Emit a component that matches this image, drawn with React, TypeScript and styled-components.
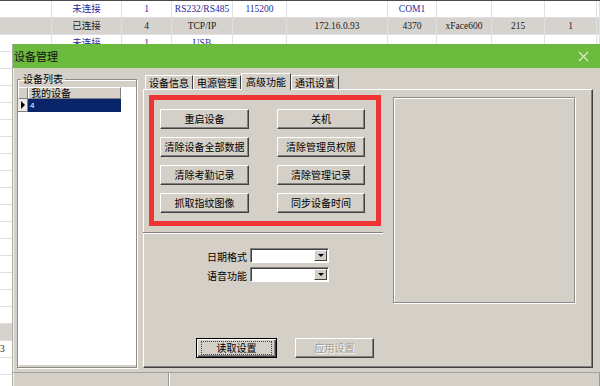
import React from 'react';
import styled, { createGlobalStyle, css } from 'styled-components';

const GlobalStyle = createGlobalStyle`
  html, body {
    margin: 0;
    padding: 0;
    background: #fff;
  }
  body {
    width: 600px;
    height: 386px;
    overflow: hidden;
    font-family: "Liberation Sans", "Noto Sans CJK SC", sans-serif;
  }
`;

const CJK = `"Noto Sans CJK SC", "Liberation Sans", sans-serif`;

type Tone = 'blue' | 'dark';

const bgRows: { cells: string[]; tone: Tone; shaded?: boolean }[] = [
  { cells: ['', '未连接', '1', 'RS232/RS485', '115200', '', 'COM1', '', '', '', ''], tone: 'blue' },
  {
    cells: ['', '已连接', '4', 'TCP/IP', '', '172.16.0.93', '4370', 'xFace600', '215', '1', ''],
    tone: 'dark',
    shaded: true,
  },
  { cells: ['', '未连接', '1', 'USB', '', '', '', '', '', '', ''], tone: 'blue' },
];

// rows hidden behind the dialog, only the left strip shows
for (let i = 3; i < 23; i++) {
  const cells = Array(11).fill('');
  if (i === 20) cells[0] = '3';
  bgRows.push({ cells, tone: 'dark', shaded: i === 19 });
}

const leftButtons = ['重启设备', '清除设备全部数据', '清除考勤记录', '抓取指纹图像'];
const rightButtons = ['关机', '清除管理员权限', '清除管理记录', '同步设备时间'];
const tabs = ['设备信息', '电源管理', '高级功能', '通讯设置'];

export default function App() {
  const buttons: string[] = [];
  leftButtons.forEach((l, i) => buttons.push(l, rightButtons[i]));

  return (
    <Page>
      <GlobalStyle />
      <BgTable>
        {bgRows.map((r, ri) =>
          r.cells.map((c, ci) => (
            <BgCell key={`${ri}-${ci}`} $tone={r.tone} $shaded={r.shaded} $left={ci === 0}>
              {c}
            </BgCell>
          ))
        )}
      </BgTable>

      <Dialog>
        <TitleBar>
          <Title>设备管理</Title>
          <svg width="11" height="11" viewBox="0 0 11 11">
            <path d="M1 1 L10 10 M10 1 L1 10" stroke="#d9eccb" strokeWidth="1.2" fill="none" />
          </svg>
        </TitleBar>

        <Body>
          <MainRow>
            <GroupBox>
              <Legend>设备列表</Legend>
              <ListBox>
                <ListLine>
                  <HeadCell $w={10} />
                  <HeadCell $w={93}>我的设备</HeadCell>
                </ListLine>
                <ListLine>
                  <Indicator>
                    <Arrow />
                  </Indicator>
                  <SelectedCell>4</SelectedCell>
                </ListLine>
              </ListBox>
            </GroupBox>

            <TabArea>
              <TabStrip>
                {tabs.map((t, i) => (
                  <Tab key={t} $active={i === 2}>
                    {t}
                  </Tab>
                ))}
              </TabStrip>
              <Panel>
                <LeftCol>
                  <ButtonArea>
                    {buttons.map((b) => (
                      <WinButton key={b}>{b}</WinButton>
                    ))}
                  </ButtonArea>
                  <Divider />
                  <FormGrid>
                    <FieldLabel>日期格式</FieldLabel>
                    <Combo>
                      <DropBtn>
                        <DownTri />
                      </DropBtn>
                    </Combo>
                    <FieldLabel>语音功能</FieldLabel>
                    <Combo>
                      <DropBtn>
                        <DownTri />
                      </DropBtn>
                    </Combo>
                  </FormGrid>
                  <ActionRow>
                    <WinButton $default $w={81}>
                      <FocusRing>读取设置</FocusRing>
                    </WinButton>
                    <WinButton $disabled $w={79}>
                      应用设置
                    </WinButton>
                  </ActionRow>
                </LeftCol>
                <RightCol>
                  <EtchedFrame />
                </RightCol>
              </Panel>
            </TabArea>
          </MainRow>

          <StatusBar>
            <StatusCell $w={155} />
            <StatusCell />
          </StatusBar>
        </Body>
      </Dialog>
    </Page>
  );
}

const Page = styled.div`
  position: relative;
  width: 600px;
  height: 386px;
  overflow: hidden;
  background: #fff;
`;

const BgTable = styled.div`
  display: grid;
  grid-template-columns: 52px 70px 50px 61px 54px 101px 49px 55px 53px 52px 3px;
  border-top: 1px solid #4a4a4a;
`;

const BgCell = styled.div<{ $tone: Tone; $shaded?: boolean; $left?: boolean }>`
  box-sizing: border-box;
  height: 17px;
  border-right: 1px solid #e0e0e0;
  border-bottom: 1px solid #e0e0e0;
  background: ${({ $shaded }) => ($shaded ? '#d6d3ce' : '#fff')};
  color: ${({ $tone }) => ($tone === 'blue' ? '#2a2a9c' : '#1a1a1a')};
  font-family: "Liberation Serif", "Noto Sans CJK SC", serif;
  font-size: 9.5px;
  line-height: 16px;
  text-align: ${({ $left }) => ($left ? 'left' : 'center')};
  white-space: nowrap;
  overflow: hidden;
`;

const Dialog = styled.div`
  position: absolute;
  left: 12px;
  top: 44px;
  width: 588px;
  height: 342px;
  box-sizing: border-box;
  border-left: 1px solid #b0aea8;
  background: #d4d0c8;
  display: flex;
  flex-direction: column;
  font-family: ${CJK};
`;

const TitleBar = styled.div`
  height: 24px;
  flex: none;
  background: #6cba3e;
  display: flex;
  align-items: center;
  justify-content: space-between;
  padding: 0 11px 0 1px;
`;

const Title = styled.span`
  font-size: 11px;
  line-height: 14px;
  color: #111;
`;

const Body = styled.div`
  flex: 1;
  display: flex;
  flex-direction: column;
  box-shadow: inset 1px 0 0 #f2f1ed;
`;

const MainRow = styled.div`
  height: 295px;
  margin-top: 5px;
  display: flex;
  gap: 6px;
  padding: 0 7px 0 4px;
`;

const GroupBox = styled.fieldset`
  box-sizing: border-box;
  width: 120px;
  height: 295px;
  margin: 0;
  padding: 0;
  min-width: 0;
  border: 1px solid #8e8c86;
  box-shadow: 1px 1px 0 #fff, inset 1px 1px 0 #fff;
`;

const Legend = styled.legend`
  font-size: 10px;
  line-height: 12px;
  padding: 0 2px;
  margin-left: 3px;
  color: #000;
`;

const ListBox = styled.div`
  margin-top: 2px;
  height: 278px;
  background: #fff;
`;

const ListLine = styled.div`
  display: flex;
`;

const HeadCell = styled.div<{ $w: number }>`
  box-sizing: border-box;
  width: ${({ $w }) => $w}px;
  height: 12px;
  background: #d4d0c8;
  border-top: 1px solid #fff;
  border-left: 1px solid #fff;
  border-right: 1px solid #808080;
  border-bottom: 1px solid #808080;
  font-size: 10px;
  line-height: 10px;
  padding-left: 2px;
  color: #000;
  white-space: nowrap;
`;

const Indicator = styled.div`
  box-sizing: border-box;
  width: 10px;
  height: 13px;
  background: #ecebe6;
  border-right: 1px solid #808080;
  border-bottom: 1px solid #808080;
  display: flex;
  align-items: center;
  justify-content: center;
`;

const Arrow = styled.span`
  width: 0;
  height: 0;
  border-top: 4px solid transparent;
  border-bottom: 4px solid transparent;
  border-left: 4px solid #000;
`;

const SelectedCell = styled.div`
  width: 93px;
  height: 13px;
  background: #0a246a;
  color: #fff;
  font-family: "Liberation Sans", sans-serif;
  font-size: 8px;
  line-height: 13px;
  padding-left: 2px;
  box-sizing: border-box;
`;

const TabArea = styled.div`
  flex: 1;
  display: flex;
  flex-direction: column;
`;

const TabStrip = styled.div`
  height: 16px;
  display: flex;
  align-items: flex-end;
  padding-left: 2px;
`;

const Tab = styled.div<{ $active?: boolean }>`
  position: relative;
  box-sizing: border-box;
  height: 14px;
  padding: 0 3px;
  font-size: 10px;
  line-height: 13px;
  color: #000;
  background: #d4d0c8;
  border-top: 1px solid #fff;
  border-left: 1px solid #fff;
  border-right: 1px solid #404040;
  white-space: nowrap;

  ${({ $active }) =>
    $active &&
    css`
      height: 17px;
      margin-bottom: -1px;
      padding: 1px 4px 0;
      z-index: 1;
    `}
`;

const Panel = styled.div`
  flex: 1;
  display: grid;
  grid-template-columns: 240px 1fr;
  border-top: 1px solid #fff;
  border-left: 1px solid #fff;
  border-right: 1px solid #404040;
  border-bottom: 1px solid #404040;
  box-shadow: inset -1px -1px 0 #808080;
`;

const LeftCol = styled.div`
  display: flex;
  flex-direction: column;
  padding: 5px 0 9px 0;
`;

const ButtonArea = styled.div`
  box-sizing: border-box;
  margin-left: 5px;
  width: 232px;
  height: 131px;
  border: 5px solid #ee3434;
  display: grid;
  grid-template-columns: 89px 88px;
  grid-auto-rows: 20px;
  column-gap: 28px;
  row-gap: 8px;
  padding: 9px 0 0 6px;
  align-content: start;
`;

const WinButton = styled.div<{ $default?: boolean; $disabled?: boolean; $w?: number }>`
  box-sizing: border-box;
  height: 20px;
  width: ${({ $w }) => ($w ? `${$w}px` : 'auto')};
  background: #d4d0c8;
  border-top: 1px solid #fff;
  border-left: 1px solid #fff;
  border-right: 1px solid #404040;
  border-bottom: 1px solid #404040;
  box-shadow: inset -1px -1px 0 #808080;
  display: flex;
  align-items: center;
  justify-content: center;
  font-size: 10px;
  line-height: 12px;
  color: #000;
  white-space: nowrap;

  ${({ $default }) =>
    $default &&
    css`
      border: 1px solid #000;
      box-shadow: inset 1px 1px 0 #fff, inset -1px -1px 0 #404040, inset -2px -2px 0 #808080;
    `}

  ${({ $disabled }) =>
    $disabled &&
    css`
      color: #a09e98;
      text-shadow: 1px 1px 0 #fff;
    `}
`;

const FocusRing = styled.span`
  box-sizing: border-box;
  width: 69px;
  height: 12px;
  outline: 1px dotted #404040;
  display: flex;
  align-items: center;
  justify-content: center;
`;

const Divider = styled.div`
  margin-top: 6px;
  margin-left: -1px;
  width: 240px;
  border-top: 1px solid #808080;
  border-bottom: 1px solid #fff;
`;

const FormGrid = styled.div`
  margin-top: 14px;
  display: grid;
  grid-template-columns: 103px 79px;
  grid-auto-rows: 15px;
  column-gap: 3px;
  row-gap: 4px;
`;

const FieldLabel = styled.div`
  font-size: 10px;
  line-height: 17px;
  text-align: right;
  color: #000;
  white-space: nowrap;
`;

const Combo = styled.div`
  box-sizing: border-box;
  height: 15px;
  background: #fff;
  border-top: 1px solid #808080;
  border-left: 1px solid #808080;
  border-right: 1px solid #fff;
  border-bottom: 1px solid #fff;
  box-shadow: inset 1px 1px 0 #404040;
  display: flex;
  justify-content: flex-end;
  padding: 1px;
`;

const DropBtn = styled.div`
  box-sizing: border-box;
  width: 13px;
  height: 100%;
  background: #d4d0c8;
  border-top: 1px solid #fff;
  border-left: 1px solid #fff;
  border-right: 1px solid #404040;
  border-bottom: 1px solid #404040;
  display: flex;
  align-items: center;
  justify-content: center;
`;

const DownTri = styled.span`
  width: 0;
  height: 0;
  border-left: 3px solid transparent;
  border-right: 3px solid transparent;
  border-top: 3px solid #000;
`;

const ActionRow = styled.div`
  margin-top: auto;
  display: flex;
  gap: 18px;
  padding-left: 52px;
`;

const RightCol = styled.div`
  padding: 7px 0 0 9px;
`;

const EtchedFrame = styled.div`
  box-sizing: border-box;
  width: 182px;
  height: 206px;
  border: 1px solid #8e8c86;
  box-shadow: 1px 1px 0 #fff, inset 1px 1px 0 #fff;
`;

const StatusBar = styled.div`
  margin-top: 4px;
  flex: 1;
  display: flex;
  border-top: 1px solid #a4a29c;
`;

const StatusCell = styled.div<{ $w?: number }>`
  ${({ $w }) => ($w ? `width: ${$w}px; flex: none;` : 'flex: 1;')}
  border-right: 1px solid #9a9892;
  box-shadow: 1px 0 0 #fff;
`;
